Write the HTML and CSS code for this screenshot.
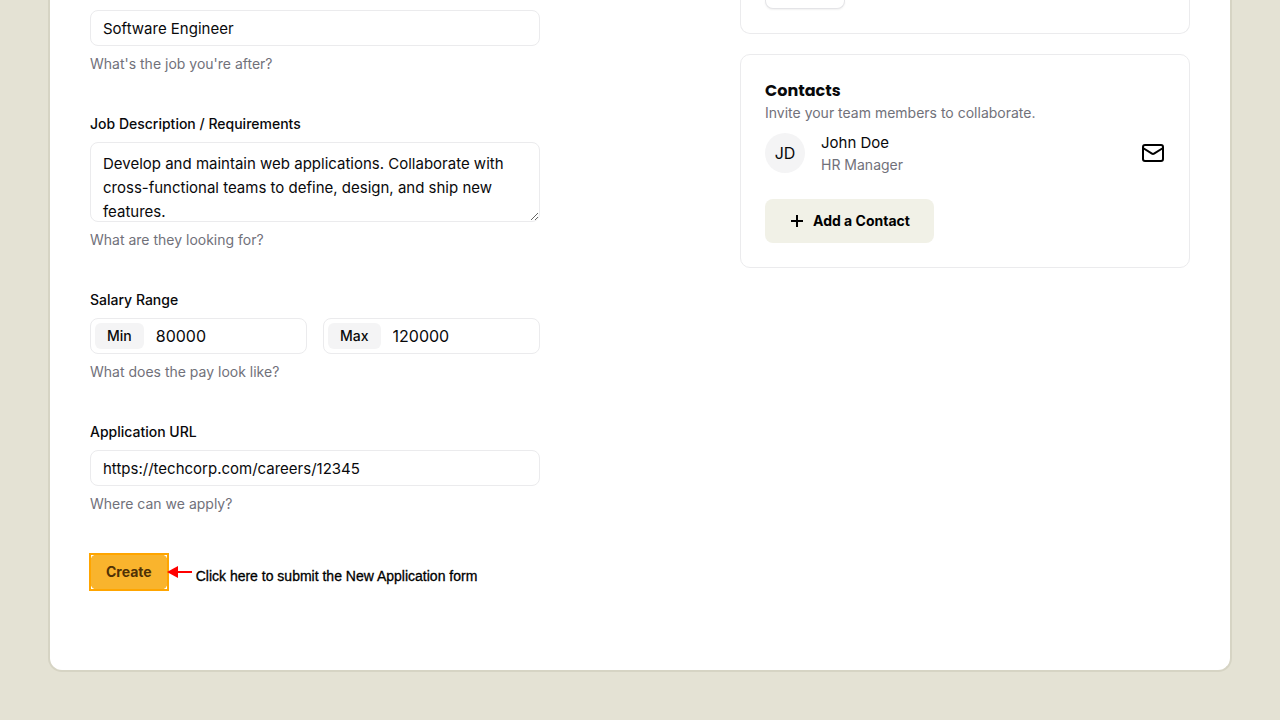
FILE: index.html
```html
<!DOCTYPE html>
<html lang="en">
<head>
<meta charset="utf-8">
<meta name="viewport" content="width=device-width, initial-scale=1">
<title>New Application</title>
<link rel="stylesheet" href="styles.css">
</head>
<body>
<main class="panel">
  <form class="form">
    <div class="field">
      <input class="control" id="title" type="text" value="Software Engineer" aria-label="Job Title">
      <p class="hint">What's the job you're after?</p>
    </div>
    <div class="field">
      <label class="label" for="description">Job Description / Requirements</label>
      <textarea class="control area" id="description">Develop and maintain web applications. Collaborate with cross-functional teams to define, design, and ship new features.</textarea>
      <p class="hint">What are they looking for?</p>
    </div>
    <div class="field">
      <span class="label" id="salary">Salary Range</span>
      <div class="range" role="group" aria-labelledby="salary">
        <div class="affixed">
          <label class="affix" for="min">Min</label>
          <input class="bare" id="min" type="text" inputmode="numeric" value="80000">
        </div>
        <div class="affixed">
          <label class="affix" for="max">Max</label>
          <input class="bare" id="max" type="text" inputmode="numeric" value="120000">
        </div>
      </div>
      <p class="hint">What does the pay look like?</p>
    </div>
    <div class="field">
      <label class="label" for="url">Application URL</label>
      <input class="control" id="url" type="text" value="https://techcorp.com/careers/12345">
      <p class="hint">Where can we apply?</p>
    </div>
    <div class="submit">
      <button class="create" type="button">Create</button>
      <span class="highlight"></span>
      <div class="callout">
        <svg class="arrow" width="25" height="12" viewBox="0 0 25 12" aria-hidden="true"><path d="M0 6 11 0v12z" fill="#f00"/><path d="M10 6h15" stroke="#f00" stroke-width="2"/></svg>
        <span class="callout-text">Click here to submit the New Application form</span>
      </div>
    </div>
  </form>
  <aside class="side">
    <section class="card card-cut">
      <button class="stub" type="button" aria-label="Add"></button>
    </section>
    <section class="card">
      <h2 class="card-title">Contacts</h2>
      <p class="card-text">Invite your team members to collaborate.</p>
      <div class="contact">
        <span class="avatar">JD</span>
        <div class="person">
          <p class="name">John Doe</p>
          <p class="role">HR Manager</p>
        </div>
        <a class="mail" href="#" aria-label="Email John Doe">
          <svg width="24" height="24" viewBox="0 0 24 24" fill="none" stroke="currentColor" stroke-width="2" stroke-linecap="round" stroke-linejoin="round" aria-hidden="true"><rect x="2" y="4" width="20" height="16" rx="2"/><path d="m22 7-8.97 5.7a1.94 1.94 0 0 1-2.06 0L2 7"/></svg>
        </a>
      </div>
      <button class="add" type="button">
        <svg width="16" height="16" viewBox="0 0 16 16" fill="none" stroke="currentColor" stroke-width="2" aria-hidden="true"><path d="M2 8h12M8 2v12"/></svg>
        Add a Contact
      </button>
    </section>
  </aside>
</main>
</body>
</html>
```
FILE: styles.css
```css
*,
*::before {
  box-sizing: border-box;
}

body {
  margin: 0;
  padding: 0 48px 48px;
  background: #e4e2d4;
  color: #09090b;
  font: 16px/24px Inter, "Liberation Sans", sans-serif;
}

p,
h2 {
  margin: 0;
}

button,
input,
textarea {
  font: inherit;
  color: inherit;
}

.panel {
  display: grid;
  grid-template-columns: repeat(2, minmax(0, 1fr));
  gap: 200px;
  padding: 0 40px 80px;
  background: #fff;
  border: 2px solid #d6d4c4;
  border-top: 0;
  border-radius: 0 0 14px 14px;
}

.form {
  display: flex;
  flex-direction: column;
  gap: 40px;
  padding-top: 10px;
}

.field {
  display: flex;
  flex-direction: column;
  gap: 8px;
}

.label {
  font-size: 14px;
  line-height: 20px;
  font-weight: 500;
}

.hint,
.card-text,
.role {
  color: #71717a;
  font-size: 14px;
  line-height: 20px;
}

.control {
  width: 100%;
  height: 36px;
  padding: 4px 12px;
  background: transparent;
  border: 1px solid #ebebed;
  border-radius: 8px;
  font-size: 15px;
}

.area {
  display: block;
  height: 80px;
  padding: 9px 12px;
  resize: vertical;
  scrollbar-width: none;
}

.range {
  display: grid;
  grid-template-columns: repeat(2, minmax(0, 1fr));
  gap: 16px;
}

.affixed {
  display: flex;
  height: 36px;
  padding: 4px;
  border: 1px solid #ebebed;
  border-radius: 8px;
}

.affix {
  padding: 0 12px;
  background: #f4f4f5;
  border-radius: 6px;
  font-size: 14px;
  line-height: 26px;
  font-weight: 500;
}

.bare {
  flex: 1;
  min-width: 0;
  padding: 0 12px;
  background: transparent;
  border: 0;
}

.submit {
  position: relative;
  width: fit-content;
}

.create {
  display: block;
  height: 36px;
  padding: 0 16px;
  background: #f9b42d;
  border: 0;
  border-radius: 8px;
  color: #4f3106;
  font-size: 14px;
  font-weight: 700;
}

.highlight {
  position: absolute;
  inset: -1px;
  border: 2px solid #ffa500;
  pointer-events: none;
}

.callout {
  position: absolute;
  left: 100%;
  top: 12px;
  display: flex;
  gap: 4px;
  white-space: nowrap;
}

.arrow {
  display: block;
  margin-left: -1px;
}

.callout-text {
  color: #000;
  font: 14px/20px "Liberation Sans", Arial, sans-serif;
  -webkit-text-stroke: 0.3px #000;
}

.side {
  display: flex;
  flex-direction: column;
  gap: 20px;
}

.card {
  padding: 24px;
  border: 1px solid #ebebed;
  border-radius: 10px;
}

.card-cut {
  padding-top: 0;
  border-top: 0;
  border-radius: 0 0 10px 10px;
}

.stub {
  display: block;
  width: 80px;
  height: 9px;
  padding: 0;
  background: #fff;
  border: 1px solid #e4e4e7;
  border-top: 0;
  border-radius: 0 0 8px 8px;
  box-shadow: 0 1px 2px rgba(0, 0, 0, 0.06);
}

.card-title {
  font: 700 16px/24px Poppins, Inter, sans-serif;
}

.contact {
  display: flex;
  align-items: center;
  gap: 16px;
  margin: 8px 0 24px;
}

.avatar {
  display: grid;
  place-items: center;
  width: 40px;
  height: 40px;
  background: #f4f4f5;
  border-radius: 50%;
}

.person {
  flex: 1;
}

.name {
  font-size: 15px;
}

.mail {
  display: flex;
  color: #000;
}

.add {
  display: flex;
  align-items: center;
  gap: 8px;
  height: 44px;
  padding: 0 24px;
  background: #f1f1e7;
  border: 0;
  border-radius: 8px;
  color: #000;
  font-size: 14px;
  font-weight: 700;
}
```
